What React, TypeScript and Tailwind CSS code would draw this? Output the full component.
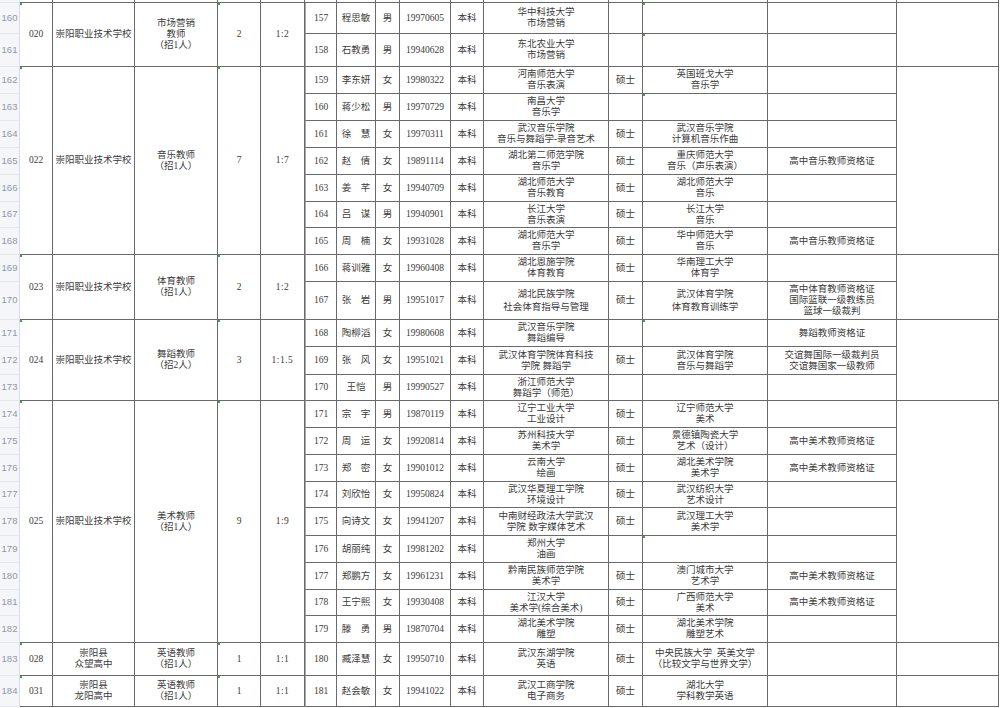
import { ReactNode } from "react"

type Person = {
  seq: string
  name: string
  sex: string
  birth: string
  ug: string[]
  deg?: string
  pg?: string[]
  cert?: string[]
  mark?: boolean
}

type Group = {
  code: string
  school: string[]
  post: string[]
  count: string
  ratio: string
  people: Person[]
}

const SPAN: Record<number, string> = {
  1: "row-span-1",
  2: "row-span-2",
  3: "row-span-3",
  7: "row-span-7",
  9: "row-span-9",
}

const GROUPS: Group[] = [
  {
    code: "020",
    school: ["崇阳职业技术学校"],
    post: ["市场营销", "教师", "（招1人）"],
    count: "2",
    ratio: "1:2",
    people: [
      { seq: "157", name: "程思敏", sex: "男", birth: "19970605", ug: ["华中科技大学", "市场营销"], mark: true },
      { seq: "158", name: "石教勇", sex: "男", birth: "19940628", ug: ["东北农业大学", "市场营销"], mark: true },
    ],
  },
  {
    code: "022",
    school: ["崇阳职业技术学校"],
    post: ["音乐教师", "（招1人）"],
    count: "7",
    ratio: "1:7",
    people: [
      { seq: "159", name: "李东妍", sex: "女", birth: "19980322", ug: ["河南师范大学", "音乐表演"], deg: "硕士", pg: ["英国班戈大学", "音乐学"] },
      { seq: "160", name: "蒋少松", sex: "男", birth: "19970729", ug: ["南昌大学", "音乐学"], mark: true },
      { seq: "161", name: "徐　慧", sex: "女", birth: "19970311", ug: ["武汉音乐学院", "音乐与舞蹈学-录音艺术"], deg: "硕士", pg: ["武汉音乐学院", "计算机音乐作曲"] },
      { seq: "162", name: "赵　倩", sex: "女", birth: "19891114", ug: ["湖北第二师范学院", "音乐学"], deg: "硕士", pg: ["重庆师范大学", "音乐（声乐表演）"], cert: ["高中音乐教师资格证"] },
      { seq: "163", name: "姜　芊", sex: "女", birth: "19940709", ug: ["湖北师范大学", "音乐教育"], deg: "硕士", pg: ["湖北师范大学", "音乐"] },
      { seq: "164", name: "吕　谋", sex: "男", birth: "19940901", ug: ["长江大学", "音乐表演"], deg: "硕士", pg: ["长江大学", "音乐"] },
      { seq: "165", name: "周　楠", sex: "女", birth: "19931028", ug: ["湖北师范大学", "音乐学"], deg: "硕士", pg: ["华中师范大学", "音乐"], cert: ["高中音乐教师资格证"] },
    ],
  },
  {
    code: "023",
    school: ["崇阳职业技术学校"],
    post: ["体育教师", "（招1人）"],
    count: "2",
    ratio: "1:2",
    people: [
      { seq: "166", name: "蒋训雅", sex: "女", birth: "19960408", ug: ["湖北恩施学院", "体育教育"], deg: "硕士", pg: ["华南理工大学", "体育学"] },
      { seq: "167", name: "张　岩", sex: "男", birth: "19951017", ug: ["湖北民族学院", "社会体育指导与管理"], deg: "硕士", pg: ["武汉体育学院", "体育教育训练学"], cert: ["高中体育教师资格证", "国际篮联一级教练员", "篮球一级裁判"] },
    ],
  },
  {
    code: "024",
    school: ["崇阳职业技术学校"],
    post: ["舞蹈教师", "（招2人）"],
    count: "3",
    ratio: "1:1.5",
    people: [
      { seq: "168", name: "陶柳滔", sex: "女", birth: "19980608", ug: ["武汉音乐学院", "舞蹈编导"], cert: ["舞蹈教师资格证"], mark: true },
      { seq: "169", name: "张　风", sex: "女", birth: "19951021", ug: ["武汉体育学院体育科技", "学院 舞蹈学"], deg: "硕士", pg: ["武汉体育学院", "音乐与舞蹈学"], cert: ["交谊舞国际一级裁判员", "交谊舞国家一级教师"] },
      { seq: "170", name: "王恺", sex: "男", birth: "19990527", ug: ["浙江师范大学", "舞蹈学（师范）"] },
    ],
  },
  {
    code: "025",
    school: ["崇阳职业技术学校"],
    post: ["美术教师", "（招1人）"],
    count: "9",
    ratio: "1:9",
    people: [
      { seq: "171", name: "宗　宇", sex: "男", birth: "19870119", ug: ["辽宁工业大学", "工业设计"], deg: "硕士", pg: ["辽宁师范大学", "美术"] },
      { seq: "172", name: "周　运", sex: "女", birth: "19920814", ug: ["苏州科技大学", "美术学"], deg: "硕士", pg: ["景德镇陶瓷大学", "艺术（设计）"], cert: ["高中美术教师资格证"] },
      { seq: "173", name: "郑　密", sex: "女", birth: "19901012", ug: ["云南大学", "绘画"], deg: "硕士", pg: ["湖北美术学院", "美术学"], cert: ["高中美术教师资格证"] },
      { seq: "174", name: "刘欣怡", sex: "女", birth: "19950824", ug: ["武汉华夏理工学院", "环境设计"], deg: "硕士", pg: ["武汉纺织大学", "艺术设计"] },
      { seq: "175", name: "向诗文", sex: "女", birth: "19941207", ug: ["中南财经政法大学武汉", "学院 数字媒体艺术"], deg: "硕士", pg: ["武汉理工大学", "美术学"] },
      { seq: "176", name: "胡丽纯", sex: "女", birth: "19981202", ug: ["郑州大学", "油画"], mark: true },
      { seq: "177", name: "郑鹏方", sex: "女", birth: "19961231", ug: ["黔南民族师范学院", "美术学"], deg: "硕士", pg: ["澳门城市大学", "艺术学"], cert: ["高中美术教师资格证"] },
      { seq: "178", name: "王宁熙", sex: "女", birth: "19930408", ug: ["江汉大学", "美术学(综合美术)"], deg: "硕士", pg: ["广西师范大学", "美术"], cert: ["高中美术教师资格证"] },
      { seq: "179", name: "滕　勇", sex: "男", birth: "19870704", ug: ["湖北美术学院", "雕塑"], deg: "硕士", pg: ["湖北美术学院", "雕塑艺术"] },
    ],
  },
  {
    code: "028",
    school: ["崇阳县", "众望高中"],
    post: ["英语教师", "（招1人）"],
    count: "1",
    ratio: "1:1",
    people: [
      { seq: "180", name: "臧泽慧", sex: "女", birth: "19950710", ug: ["武汉东湖学院", "英语"], deg: "硕士", pg: ["中央民族大学  英美文学", "（比较文学与世界文学）"] },
    ],
  },
  {
    code: "031",
    school: ["崇阳县", "龙阳高中"],
    post: ["英语教师", "（招1人）"],
    count: "1",
    ratio: "1:1",
    people: [
      { seq: "181", name: "赵会敏", sex: "女", birth: "19941022", ug: ["武汉工商学院", "电子商务"], deg: "硕士", pg: ["湖北大学", "学科教学英语"] },
    ],
  },
]

const CELL = "relative flex flex-col items-center justify-center text-center border-r border-b border-[#6a6a6a] leading-[11px] overflow-hidden"
const HEAD = "flex items-center justify-center bg-[#f4f6f9] border-r border-b border-r-[#d9dde3] border-b-[#e4e7ec] text-[9.5px] text-[#8e98a7] font-['Liberation_Sans',sans-serif]"

const Mark = () => <span className="absolute left-0 top-0 h-[2px] w-[2px] bg-[#2fa84f]" />

const Cell = ({ children, className = "", mark }: { children?: ReactNode; className?: string; mark?: boolean }) => (
  <div className={`${CELL} ${className}`}>
    {mark && <Mark />}
    {children}
  </div>
)

const Lines = ({ lines }: { lines?: string[] }) => (
  <>
    {(lines ?? []).map((l, i) => (
      <span key={i} className="whitespace-pre">
        {l}
      </span>
    ))}
  </>
)

export default function App() {
  let rowNo = 160

  return (
    <div className="h-[708px] w-[1000px] overflow-hidden bg-white">
      <div
        className={
          "grid w-[999px] grid-cols-[20px_33px_82px_83px_43px_44px_32px_39px_24px_51px_33px_125px_34px_125px_129px_102px] " +
          "grid-rows-[3px_31px_33px_27px_27px_27px_27px_27px_26px_27px_27px_38px_27px_28px_26px_27px_27px_27px_26px_28px_27px_27px_26px_27px_33px_31px] " +
          "text-[9.5px] text-[#3b3b3b] font-['Liberation_Serif','Noto_Sans_CJK_SC',serif]"
        }
      >
        {/* tail of the row above */}
        <div className="bg-[#f4f6f9] border-r border-r-[#d9dde3] border-b border-b-[#e4e7ec]" />
        {Array.from({ length: 15 }).map((_, i) => (
          <div key={i} className="border-r border-b border-[#6a6a6a]" />
        ))}

        {GROUPS.map(g =>
          g.people.map((p, i) => {
            const no = rowNo++
            const span = SPAN[g.people.length]
            return [
              <div key={`h${no}`} className={HEAD}>
                {no}
              </div>,
              i === 0 && (
                <Cell key={`a${no}`} className={span} mark>
                  {g.code}
                </Cell>
              ),
              i === 0 && (
                <Cell key={`b${no}`} className={span}>
                  <Lines lines={g.school} />
                </Cell>
              ),
              i === 0 && (
                <Cell key={`c${no}`} className={`${span} leading-[11.5px]`}>
                  <Lines lines={g.post} />
                </Cell>
              ),
              i === 0 && (
                <Cell key={`d${no}`} className={span} mark>
                  {g.count}
                </Cell>
              ),
              i === 0 && (
                <Cell key={`e${no}`} className={`${span} tracking-[0.5px]`}>
                  {g.ratio}
                </Cell>
              ),
              <Cell key={`f${no}`} className="border-l border-l-[#a8a8a8]">
                {p.seq}
              </Cell>,
              <Cell key={`g${no}`}>{p.name}</Cell>,
              <Cell key={`s${no}`}>{p.sex}</Cell>,
              <Cell key={`i${no}`}>{p.birth}</Cell>,
              <Cell key={`j${no}`}>本科</Cell>,
              <Cell key={`k${no}`} className={no === 170 ? "leading-[13px]" : ""}>
                <Lines lines={p.ug} />
              </Cell>,
              <Cell key={`l${no}`}>{p.deg}</Cell>,
              <Cell key={`m${no}`} mark={p.mark} className={no === 170 ? "leading-[13px]" : ""}>
                <Lines lines={p.pg} />
              </Cell>,
              <Cell key={`n${no}`} className="leading-[11.5px]">
                <Lines lines={p.cert} />
              </Cell>,
              i === 0 && <Cell key={`o${no}`} className={span} />,
            ]
          }),
        )}
      </div>
    </div>
  )
}
